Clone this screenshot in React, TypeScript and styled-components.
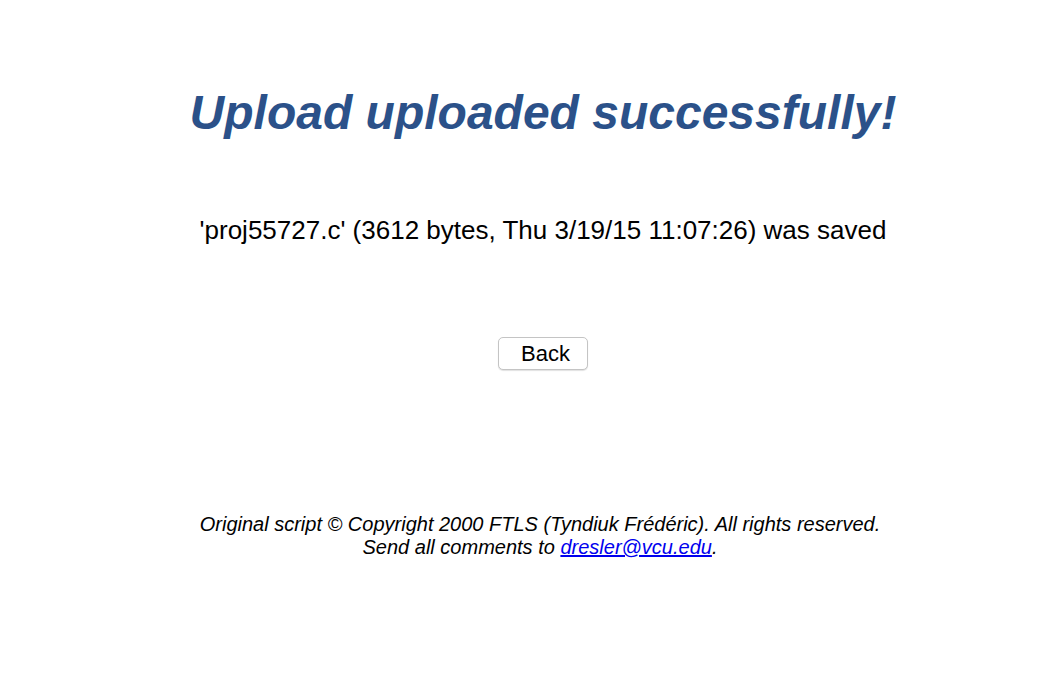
import React from "react";
import styled, { createGlobalStyle } from "styled-components";

const Global = createGlobalStyle`
  html, body { margin: 0; padding: 0; background: #ffffff; }
  body { font-family: "Liberation Sans", Arial, Helvetica, sans-serif; color: #000; }
`;

const Page = styled.main`
  display: flex;
  flex-direction: column;
  align-items: center;
  padding: 84px 0 0 30px;
`;

const Title = styled.h1`
  margin: 0;
  font-size: 48px;
  line-height: 58px;
  font-weight: bold;
  font-style: italic;
  color: #2b5189;
`;

const Message = styled.p`
  margin: 73px 0 0;
  font-size: 26px;
  line-height: 30px;
`;

const BackButton = styled.button`
  margin-top: 92px;
  width: 90px;
  height: 33px;
  padding: 0 0 0 5px;
  font-family: "Liberation Sans", Arial, sans-serif;
  font-size: 22px;
  color: #000;
  background: #ffffff;
  border: 1px solid #c4c4c4;
  border-radius: 5px;
  box-shadow: 0 1px 1px rgba(0, 0, 0, 0.12);
`;

const Footer = styled.footer`
  margin: 143px 6px 0 0;
  text-align: center;
  font-size: 20px;
  line-height: 23px;
  font-style: italic;
`;

const Mail = styled.a`
  color: #0000ee;
  text-decoration: underline;
`;

export default function App() {
  return (
    <>
      <Global />
      <Page>
        <Title>Upload uploaded successfully!</Title>
        <Message>'proj55727.c' (3612 bytes, Thu 3/19/15 11:07:26) was saved</Message>
        <BackButton type="button">Back</BackButton>
        <Footer>
          Original script © Copyright 2000 FTLS (Tyndiuk Frédéric). All rights reserved.
          <br />
          Send all comments to <Mail href="mailto:dresler@vcu.edu">dresler@vcu.edu</Mail>.
        </Footer>
      </Page>
    </>
  );
}
